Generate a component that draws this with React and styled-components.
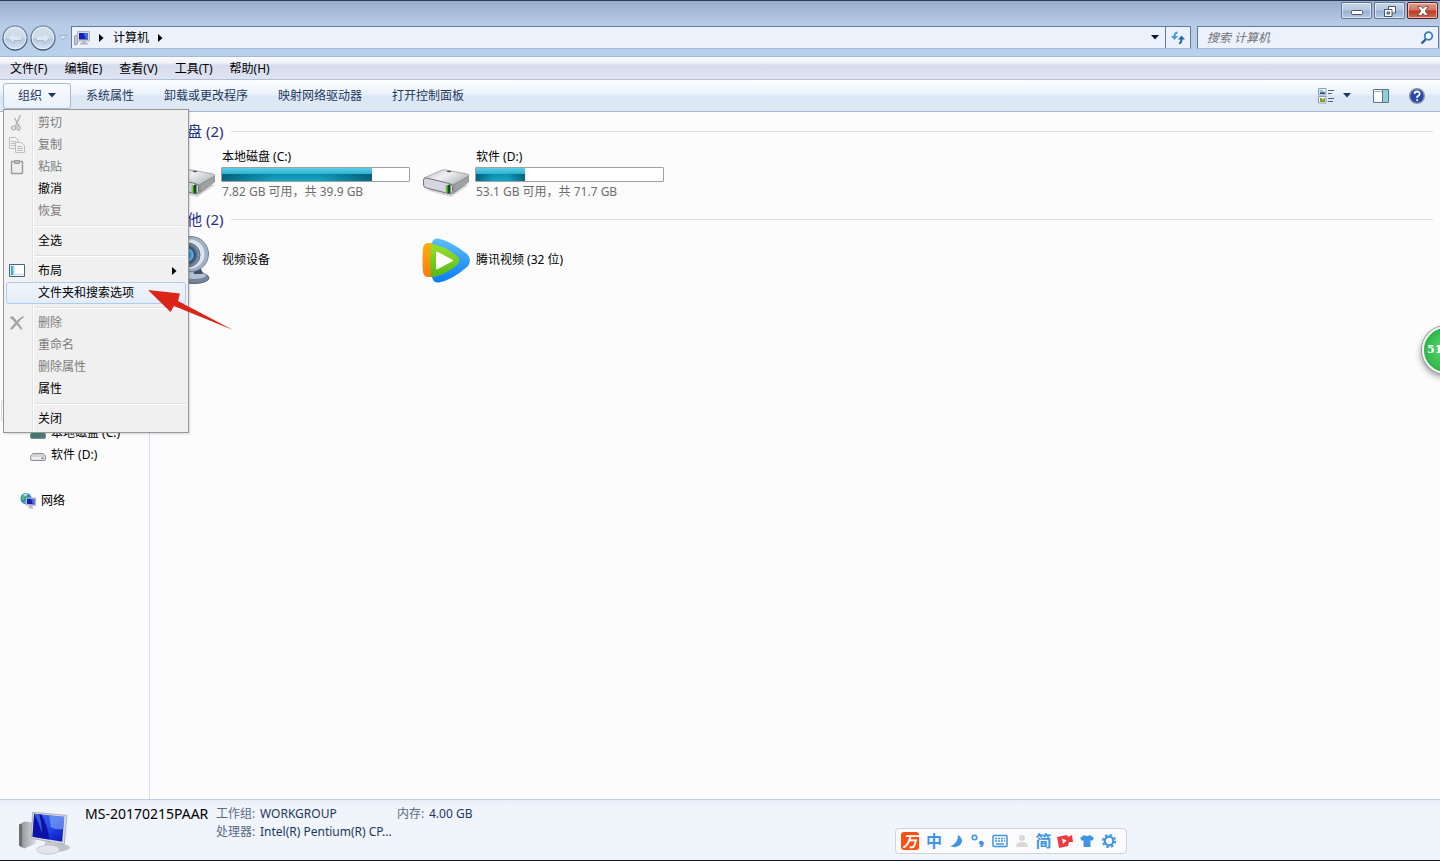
import React from "react";
import styled, { createGlobalStyle, css } from "styled-components";

const Global = createGlobalStyle`
  * { box-sizing: border-box; }
  body { margin: 0; }
  body, button, input {
    font-family: "Noto Sans", "Noto Sans CJK SC", sans-serif;
    font-size: 12px;
    line-height: 18px;
    color: #000;
  }
  button { padding: 0; border: 0; background: none; }
  svg { display: block; flex: none; }
`;

const Window = styled.div`
  position: relative;
  display: flex;
  flex-direction: column;
  min-height: 100vh;
  overflow: hidden;
  border-top: 1px solid #2b3a55;
  border-bottom: 1px solid #10182c;
  background: #fcfcfc;
`;

/* ---------- frame ---------- */
const Frame = styled.header`
  background: linear-gradient(#98afcd, #b7cce6 24px, #b9d1ec 56px);
  border-bottom: 1px solid #a3b8d4;
`;
const Captions = styled.div`
  display: flex;
  justify-content: flex-end;
  gap: 2px;
  height: 24px;
  padding: 1px 2px 0 0;
`;
const CaptionButton = styled.button`
  display: flex;
  align-items: center;
  justify-content: center;
  width: 31px;
  height: 17px;
  padding-top: 1px;
  border: 1px solid #5f7795;
  border-radius: 2px;
  box-shadow: inset 0 0 0 1px rgba(255, 255, 255, 0.55);
  background: ${(p) =>
    p.$close
      ? "linear-gradient(#e3a08f, #d5715b 48%, #bd3a22 52%, #cf6a52)"
      : "linear-gradient(#c6d6ea, #b4c8e1 48%, #98b1d0 52%, #b3c9e4)"};
  ${(p) => p.$close && css`border-color: #5a1f22;`}
`;
const AddressRow = styled.div`
  display: flex;
  align-items: center;
  height: 31px;
  padding: 0 1px 6px 2px;
`;
const Travel = styled.div`
  display: flex;
  align-items: center;
  gap: 2px;
  width: 69px;
`;
const RoundButton = styled.button`
  flex: none;
  width: 26px;
  height: 26px;
`;
const Address = styled.div`
  flex: 1;
  display: flex;
  align-items: center;
  height: 23px;
  border: 1px solid #63799a;
  border-bottom-color: #a9bdd8;
  background: #ebf2fb;
`;
const Crumb = styled.button`
  display: flex;
  align-items: center;
  gap: 9px;
  padding-left: ${(p) => p.$lead || 9}px;
`;
const Spacer = styled.div`
  flex: 1;
`;
const AddressButton = styled.button`
  display: flex;
  align-items: center;
  justify-content: center;
  width: ${(p) => p.$w}px;
  height: 21px;
  border-left: ${(p) => (p.$line ? "1px solid #63799a" : "0")};
`;
const Search = styled.label`
  display: flex;
  align-items: center;
  width: 242px;
  height: 23px;
  margin-left: 6px;
  padding: 0 4px 0 9px;
  border: 1px solid #63799a;
  border-bottom-color: #a9bdd8;
  background: #ebf2fb;
`;
const SearchInput = styled.input`
  flex: 1;
  min-width: 0;
  padding: 0;
  border: 0;
  outline: 0;
  background: none;
  font-style: italic;
  &::placeholder { color: #6e7177; opacity: 1; }
`;

/* ---------- bars ---------- */
const MenuBar = styled.nav`
  display: flex;
  align-items: center;
  gap: 1px;
  height: 23px;
  padding: 2px 2px 0;
  background: linear-gradient(#fdfdfe, #eef1f8 6px, #d6dcec 8px, #dee4f2);
  border-bottom: 1px solid #b2bfd6;
`;
const MenuBarButton = styled.button`
  padding: 0 8px;
`;
const ToolBar = styled.div`
  display: flex;
  align-items: center;
  height: 32px;
  padding: 0 15px 0 3px;
  background: linear-gradient(#fbfdff, #eaf2fb 14px, #dce7f5 16px, #dfe9f6);
  border-bottom: 1px solid #a5b6d1;
`;
const ToolButton = styled.button`
  display: flex;
  align-items: center;
  gap: 6px;
  height: 26px;
  padding: 0 15px;
  color: #1e395b;
  ${(p) => p.$open && css`
    padding: 0 14px;
    border: 1px solid #a8bad4;
    border-radius: 3px;
    background: linear-gradient(#f8fbfe, #e9f1fa);
  `}
`;
const IconTools = styled.div`
  display: flex;
  align-items: center;
`;
const IconButton = styled.button`
  display: flex;
  align-items: center;
  justify-content: center;
  height: 24px;
  margin-left: ${(p) => p.$gap}px;
`;

/* ---------- body ---------- */
const Body = styled.div`
  flex: 1;
  display: flex;
`;
const NavPane = styled.aside`
  width: 150px;
  padding-top: 288px;
  border-right: 1px solid #d9e0ea;
`;
const NavSelected = styled.div`
  height: 22px;
  margin: 0 1px;
  border: 1px solid #d9d9d9;
  border-radius: 3px;
`;
const NavItem = styled.a`
  display: flex;
  align-items: center;
  gap: 5px;
  height: 22px;
  padding-left: ${(p) => (p.$root ? 20 : 30)}px;
  margin-top: ${(p) => (p.$root ? 24 : 0)}px;
  color: #000;
  text-decoration: none;
`;
const Main = styled.main`
  flex: 1;
  padding: 8px 7px 0 18px;
`;
const GroupHeading = styled.h2`
  display: flex;
  align-items: center;
  gap: 8px;
  height: 22px;
  margin: 0;
  padding-left: 4px;
  font-size: 15px;
  font-weight: 400;
  color: #1e3287;
  &::after { content: ""; flex: 1; height: 1px; background: #dcdcdc; }
`;
const Tiles = styled.div`
  display: grid;
  grid-template-columns: repeat(auto-fill, 254px);
`;
const Tile = styled.div`
  display: flex;
  align-items: center;
  gap: 5px;
  height: ${(p) => (p.$tall ? 66 : 60)}px;
  padding-bottom: ${(p) => (p.$tall ? 2 : 0)}px;
`;
const TileText = styled.div`
  display: flex;
  flex-direction: column;
  gap: 1px;
  width: 189px;
`;
const TileLine = styled.span`
  padding-left: 1px;
  color: ${(p) => (p.$muted ? "#6d6d6d" : "#000")};
`;
const Meter = styled.div`
  height: 15px;
  border: 1px solid #a0a0a0;
  border-radius: 1px;
  background: #fff;
`;
const MeterFill = styled.div`
  height: 13px;
  background:
    linear-gradient(90deg, rgba(0, 60, 85, 0.6), transparent 35%, transparent 65%, rgba(0, 60, 85, 0.6)) 0 6px / 100% 7px no-repeat,
    linear-gradient(#5ccfe8, #2fb2d0 45%, #0a91b2 48%, #14a6c3);
`;

/* ---------- details pane ---------- */
const Details = styled.footer`
  display: flex;
  align-items: flex-start;
  height: 61px;
  padding: 5px 0 0 17px;
  border-top: 1px solid #c2cddf;
  background: linear-gradient(#e6edf7, #f0f4fb 6px);
  color: #1e395b;
`;
const MachineName = styled.strong`
  margin-left: 14px;
  width: 131px;
  font-size: 14px;
  font-weight: 400;
  color: #000;
`;
const Facts = styled.dl`
  display: grid;
  grid-template-columns: 44px 137px 32px auto;
  margin: 0;
`;
const FactName = styled.dt`
  color: #5a6a83;
`;
const FactValue = styled.dd`
  margin: 0;
  white-space: nowrap;
`;

/* ---------- drop-down menu ---------- */
const Menu = styled.div`
  position: absolute;
  left: 3px;
  top: 108px;
  width: 186px;
  padding: 2px;
  border: 1px solid #979797;
  background: linear-gradient(90deg, #f1f1f1 28px, #e2e3e3 28px, #e2e3e3 29px, #fff 29px, #fff 30px, #f0f0f0 30px);
  box-shadow: 1px 1px 2px rgba(0, 0, 0, 0.15);
`;
const MenuItem = styled.button`
  display: flex;
  align-items: center;
  width: 100%;
  height: 22px;
  padding-right: 8px;
  border: 1px solid transparent;
  border-radius: 3px;
  color: ${(p) => (p.disabled ? "#7c7c7c" : "#000")};
  ${(p) => p.$hot && css`
    border-color: #aeccee;
    background: linear-gradient(rgba(240, 245, 252, 0.8), rgba(224, 236, 248, 0.8));
  `}
`;
const MenuIcon = styled.span`
  width: 31px;
  padding-left: 2px;
`;
const MenuLabel = styled.span`
  flex: 1;
  text-align: left;
`;
const Separator = styled.div`
  height: 8px;
  margin-left: 28px;
  background: linear-gradient(transparent 3px, #e0e0e0 3px, #e0e0e0 4px, #fff 4px, #fff 5px, transparent 5px);
`;
const Pointer = styled.svg`
  position: absolute;
  left: 148px;
  top: 288px;
`;

/* ---------- floating widgets ---------- */
const Ime = styled.div`
  position: absolute;
  right: 313px;
  bottom: 6px;
  display: flex;
  align-items: center;
  width: 232px;
  height: 26px;
  padding: 0 6px 0 3px;
  border: 1px solid #cfd3da;
  border-radius: 4px;
  background: #fbfbfd;
`;
const ImeButton = styled.button`
  display: flex;
  align-items: center;
  justify-content: center;
  flex: 1;
  height: 22px;
  font-size: 16px;
  font-weight: 700;
  color: #3f94e4;
  &:first-child { flex: 0 0 24px; justify-content: flex-start; padding-left: 2px; }
`;
const ImeLogo = styled.span`
  width: 18px;
  height: 18px;
  border-radius: 3px;
  background: #fb5012;
  color: #fff;
  font-size: 15px;
  font-style: italic;
  text-align: center;
`;
const Ball = styled.div`
  position: absolute;
  right: -30px;
  top: 325px;
  width: 48px;
  height: 48px;
  padding: 13px 0 0 3px;
  border: 2px solid #eef4f0;
  border-radius: 50%;
  background: radial-gradient(circle at 50% 50%, #63da72, #35bd4e 60%, #1e8d3a 92%);
  box-shadow: 0 0 0 1px #8e9a94, -1px 3px 6px rgba(0, 0, 0, 0.4);
  color: #fff;
  font: 700 11px/18px "DejaVu Serif", serif;
`;

/* ---------- drawings ---------- */
const Triangle = ({ dir = "down", color = "#000" }) => {
  const d = dir === "down" ? "M0 0h8L4 4.5z" : "M0 0v8L4.5 4z";
  return (
    <svg width={dir === "down" ? 8 : 5} height={dir === "down" ? 5 : 8} aria-hidden="true">
      <path d={d} fill={color} />
    </svg>
  );
};

const RoundArrow = ({ back }) => {
  const id = back ? "rb" : "rf";
  return (
    <svg width="26" height="26" viewBox="0 0 26 26" aria-hidden="true">
      <defs>
        <linearGradient id={id} x1="0" y1="0" x2="0" y2="1">
          <stop offset="0" stopColor="#d5e1ee" />
          <stop offset=".48" stopColor="#ccd9e8" />
          <stop offset=".56" stopColor="#b5c8dc" />
          <stop offset="1" stopColor="#dbe9f6" />
        </linearGradient>
        <linearGradient id={`${id}s`} x1="0" y1="0" x2="0" y2="1">
          <stop offset="0" stopColor="#7f93af" />
          <stop offset="1" stopColor="#46566e" />
        </linearGradient>
      </defs>
      <circle cx="13" cy="13" r="12" fill={`url(#${id})`} stroke={`url(#${id}s)`} strokeWidth="1.3" />
      <circle cx="13" cy="13" r="10.8" fill="none" stroke="#eef5fb" strokeOpacity=".75" />
      <path
        d={
          back
            ? "M6.500 13.500L12 8.500v3h7v4h-7v3z"
            : "M19.500 13.500L14 8.500v3H7v4h7v3z"
        }
        fill="#dce7f2"
      />
      <path
        d={back ? "M7 14l5 4.500v-3h7" : "M19 14l-5 4.500v-3H7"}
        fill="none"
        stroke="#9fb3c9"
        strokeWidth=".8"
      />
    </svg>
  );
};

const SmallComputer = () => (
  <svg width="16" height="16" viewBox="0 0 16 16" aria-hidden="true">
    <path d="M.5 6l3-1v9l-2 1-1-.500z" fill="#c5c9ce" stroke="#7e848c" strokeWidth=".7" />
    <path d="M3.500 1.500h12v9.500h-12z" fill="#d9dcdf" stroke="#a3a8ae" strokeWidth=".8" />
    <path d="M5 3h9v6.500H5z" fill="#1420b4" />
    <path d="M9.500 3H14v6.500h-2z" fill="#4768e4" />
    <path d="M8 11h4v2h2v1.500H6V13h2z" fill="#b4b8bd" />
  </svg>
);

const Computer = () => (
  <svg width="54" height="54" viewBox="0 0 52 52" aria-hidden="true">
    <defs>
      <linearGradient id="screen" x1="0" y1="0" x2="0.700" y2="1">
        <stop offset="0" stopColor="#3b66e6" />
        <stop offset=".5" stopColor="#2a50ea" />
        <stop offset="1" stopColor="#1020c8" />
      </linearGradient>
      <linearGradient id="tower" x1="0" y1="0" x2="1" y2="0">
        <stop offset="0" stopColor="#8b8e92" />
        <stop offset="1" stopColor="#dcdee0" />
      </linearGradient>
    </defs>
    <ellipse cx="38" cy="41" rx="13" ry="4" fill="#8d949c" opacity=".5" />
    <path d="M2 19l5-3 11 1v20L7 42l-5-3z" fill="url(#tower)" />
    <path d="M2 18l3 1v22l-3-2z" fill="#6b6e72" />
    <path d="M27 35h7l1 7h-9z" fill="#c8cccf" />
    <ellipse cx="30" cy="43" rx="11" ry="4.500" fill="#e3e6e8" stroke="#b4b8bc" strokeWidth=".6" />
    <path d="M15 7l33 3-2.500 28L14 32z" fill="#d8dbde" stroke="#9a9ea3" strokeWidth=".7" />
    <path d="M16.500 8.500l29 2.700L43.500 35.500 15 30.500z" fill="url(#screen)" />
    <path d="M16.500 8.500l7 .6Q30 20 31 33.300L15 30.500z" fill="#0a12a8" />
    <path d="M16.500 8.500l5 .5Q24 20 24 27q-3-10-7.500-18.500z" fill="#4f78ee" opacity=".7" />
    <path d="M31 10l14.500 1.200-1 12q-8 1-12-2z" fill="#86aef8" opacity=".6" />
  </svg>
);

const Drive = ({ flag }) => {
  const id = flag ? "driveC" : "driveD";
  return (
    <svg width="48" height="48" viewBox="0 0 48 48" aria-hidden="true">
      <defs>
        <linearGradient id={id} x1="0" y1="0" x2="1" y2=".6">
          <stop offset="0" stopColor="#b9babd" />
          <stop offset=".5" stopColor="#f0f0f1" />
          <stop offset="1" stopColor="#b7b8bb" />
        </linearGradient>
      </defs>
      <path d="M4 40l25 7 18-12-6-1z" fill="#777" opacity=".3" />
      <path d="M2 28L19 20.500q2-1 5-.5l21 4q3 1 1.500 2.500L31 35z" fill={`url(#${id})`} stroke="#8b8d90" strokeWidth=".7" />
      <path d="M30 35l17-9.500V32L31 44z" fill="#939599" />
      <path d="M33 36.500l13-8M33 39l13-8" stroke="#b9bbbe" strokeWidth=".8" />
      <path d="M1.500 30q0-2.500 3-2l23 5.500q3 .7 3 3v5q0 3-3 2.300L4.500 38q-3-.7-3-3z" fill="#d5d6e2" stroke="#707378" />
      <path d="M25 35.500l3.500-1.500v9.500l-3.500-.500z" fill="#174d22" />
      <path d="M23.500 35.500l2-.5v8l-2-.5z" fill="#79c843" />
      <ellipse cx="27" cy="21.500" rx="2.500" ry=".8" fill="#555" />
    </svg>
  );
};

const Webcam = () => (
  <svg width="48" height="48" viewBox="0 0 48 48" aria-hidden="true">
    <defs>
      <radialGradient id="cam" cx=".45" cy=".5">
        <stop offset="0" stopColor="#0d2f52" />
        <stop offset=".25" stopColor="#2f86c8" />
        <stop offset=".5" stopColor="#5fb0e0" />
        <stop offset=".65" stopColor="#31496a" />
        <stop offset="1" stopColor="#8495ae" />
      </radialGradient>
    </defs>
    <ellipse cx="26" cy="42" rx="15" ry="5.500" fill="#76859c" stroke="#54637a" />
    <ellipse cx="26" cy="39.500" rx="12.500" ry="4" fill="#b4c0d0" stroke="#65748a" strokeWidth=".7" />
    <path d="M24 30h8l3 8h-9z" fill="#3f4f68" />
    <circle cx="23" cy="18" r="17.500" fill="#a3b1c5" stroke="#72839b" />
    <circle cx="22" cy="18" r="14.500" fill="#dbe3ec" />
    <circle cx="20" cy="19" r="12" fill="url(#cam)" stroke="#5b6a81" />
  </svg>
);

const TencentVideo = () => (
  <svg width="48" height="48" viewBox="0 0 48 48" aria-hidden="true">
    <defs>
      <linearGradient id="tb" x1="0" y1="0" x2="0" y2="1">
        <stop offset="0" stopColor="#5cc0fa" />
        <stop offset="1" stopColor="#0a7cfb" />
      </linearGradient>
      <linearGradient id="to" x1="0" y1="0" x2="0" y2="1">
        <stop offset="0" stopColor="#ffae0c" />
        <stop offset="1" stopColor="#ff7a10" />
      </linearGradient>
      <linearGradient id="tg" x1="0" y1="0" x2="0" y2="1">
        <stop offset="0" stopColor="#9be02e" />
        <stop offset="1" stopColor="#55b810" />
      </linearGradient>
    </defs>
    <path d="M10 7q1-5 6-4.500 12 2 29 15.500 6 6.500 0 13-15 13-28 15.500-6 .5-7-5.500-2-16 0-34z" fill="url(#tb)" />
    <path d="M1 12q1-5 5-5h4q14 34 0 34H6q-4 0-5-5-1-12 0-24z" fill="url(#to)" />
    <path d="M9 8q12 1 26 12 5 4.500 0 9-13 11-26 12-2-16 0-33z" fill="url(#tg)" />
    <path d="M14 17q0-2 2-1l14 7.500q2 1 0 2L16 33q-2 1-2-1z" fill="#fff" />
  </svg>
);

const SmallDrive = ({ system }) => (
  <svg width="16" height="16" viewBox="0 0 16 16" aria-hidden="true">
    {system && <path d="M1 3h14v6H1z" fill="#3d7fa6" />}
    <path d="M3 6.500h10q2 1.500 2.500 3V12q0 1.500-1.500 1.500H2Q.5 13.500.5 12V9.500Q1 8 3 6.500z" fill={system ? "#3c8a78" : "#d3d4d6"} stroke="#77797c" strokeWidth=".8" />
    <path d="M1.500 10h13v2.500h-13z" fill={system ? "#4f6f78" : "#eeeff0"} />
    <path d="M11.500 10.500h2v1.500h-2z" fill="#6a7a6a" />
  </svg>
);

const Network = () => (
  <svg width="16" height="16" viewBox="0 0 16 16" aria-hidden="true">
    <circle cx="6" cy="5.500" r="5.500" fill="#2a86cf" />
    <path d="M2 3q2-3 6-2.500L7 3 4.500 4.500 4 7 1 6zM3 8l3 .5V11z" fill="#5cc06a" />
    <path d="M3 2q2-2 5-1L6 3z" fill="#bfe6f4" />
    <path d="M6 4.500l9.500.5v7.500L6 12z" fill="#dcdfe4" stroke="#8a8f98" strokeWidth=".6" />
    <path d="M7 5.500l7.500.5v5.500L7 11z" fill="#1420b8" />
    <path d="M11 5.800l3.500.2v5.500H13z" fill="#4a6be6" />
    <path d="M9 12.500h3l1.500 3h-5z" fill="#b4b9c0" />
  </svg>
);

const MENU_ICONS = {
  cut: (
    <svg width="16" height="16" viewBox="0 0 16 16" fill="none" stroke="#b0b0b0" strokeWidth="1.300">
      <path d="M11.500 0L6.500 11M5.500 3l4.500 8" />
      <ellipse cx="4.500" cy="13" rx="2" ry="1.800" />
      <ellipse cx="9.500" cy="13" rx="1.500" ry="2.200" />
    </svg>
  ),
  copy: (
    <svg width="16" height="16" viewBox="0 0 16 16" fill="#f2f2f2" stroke="#bdbdbd">
      <path d="M.5.500h6l2.500 2.500v8.500H.5zM2 4.500h5M2 6.500h5M2 8.500h4" />
      <path d="M6.500 5.500h6l3 3v7h-9zM8 9.500h5M8 11.500h6M8 13.500h6" />
    </svg>
  ),
  paste: (
    <svg width="16" height="16" viewBox="0 0 16 16" fill="#eee" stroke="#9c9c9c">
      <path d="M3 2.500h10q.5 0 .5.500v11q0 .5-.5.500H3q-.5 0-.5-.500V3q0-.5.5-.500z" strokeWidth="1.400" />
      <path d="M5.500 1.500h5v3h-5z" fill="#bbb" />
    </svg>
  ),
  layout: (
    <svg width="16" height="16" viewBox="0 0 16 16">
      <path d="M.5 1.500h15v12H.5z" fill="#fff" stroke="#44647f" />
      <path d="M1.500 2.500h4v10h-4z" fill="#a5d8ea" />
      <path d="M2 3h2v9H2z" fill="#4fa5cb" />
      <path d="M5.500 10.500H15v2H5.500z" fill="#d3e2ea" />
    </svg>
  ),
  remove: (
    <svg width="16" height="16" viewBox="0 0 16 16" fill="#a6a6a6">
      <path d="M.5 2.500l3-1.500Q6 3 7.800 6 11 2 14.500 1L15 2Q12 4 9.300 8q3 3 4.200 6l-2 .5Q10 12 7.500 9.800 5 12.500 3 15l-2-1.500Q3.500 11 6 7.800 3.500 4.500.5 2.500z" />
    </svg>
  ),
};

const MENU = [
  { label: "剪切", icon: "cut", off: true },
  { label: "复制", icon: "copy", off: true },
  { label: "粘贴", icon: "paste", off: true },
  { label: "撤消" },
  { label: "恢复", off: true },
  null,
  { label: "全选" },
  null,
  { label: "布局", icon: "layout", sub: true },
  { label: "文件夹和搜索选项", hot: true },
  null,
  { label: "删除", icon: "remove", off: true },
  { label: "重命名", off: true },
  { label: "删除属性", off: true },
  { label: "属性" },
  null,
  { label: "关闭" },
];

const DRIVES = [
  { name: "本地磁盘 (C:)", info: "7.82 GB 可用，共 39.9 GB", used: 80.4, flag: true },
  { name: "软件 (D:)", info: "53.1 GB 可用，共 71.7 GB", used: 26 },
];

const BLUE = "#3f94e4";

export default function App() {
  return (
    <>
      <Global />
      <Window>
        <Frame>
          <Captions>
            <CaptionButton aria-label="最小化">
              <svg width="12" height="8"><rect x=".5" y="3.500" width="11" height="4" rx="1" fill="#fff" stroke="#4a5568" /></svg>
            </CaptionButton>
            <CaptionButton aria-label="还原">
              <svg width="12" height="11" viewBox="0 0 12 11" stroke="#4a5568">
                <path d="M4.500.5h7v6.500h-7z" fill="#fff" />
                <path d="M.5 3.500h7.500v7H.5z" fill="#fff" />
                <path d="M3 6h2.500v2H3z" fill="#a9bdd8" />
              </svg>
            </CaptionButton>
            <CaptionButton $close aria-label="关闭窗口">
              <svg width="12" height="10" viewBox="0 0 12 10">
                <path d="M.5.500h3.500L6 2.500 8 .5h3.500L8.200 5l3.300 4.500H8L6 7.500l-2 2H.5L3.800 5z" fill="#fff" stroke="#55424a" strokeWidth=".8" />
              </svg>
            </CaptionButton>
          </Captions>
          <AddressRow>
            <Travel>
              <RoundButton aria-label="后退"><RoundArrow back /></RoundButton>
              <RoundButton aria-label="前进"><RoundArrow /></RoundButton>
              <svg width="10" height="6"><path d="M1 .5h8L5 5z" fill="#d3e1f0" stroke="#9db2cd" /></svg>
            </Travel>
            <Address>
              <Crumb $lead={2} aria-label="位置">
                <SmallComputer />
                <Triangle dir="right" />
              </Crumb>
              <Crumb>
                计算机
                <Triangle dir="right" />
              </Crumb>
              <Spacer />
              <AddressButton $w={20} aria-label="历史记录"><Triangle color="#0c1a3a" /></AddressButton>
              <AddressButton $w={25} $line aria-label="刷新">
                <svg width="14" height="14" viewBox="0 0 14 14" fill="none" strokeWidth="2">
                  <path d="M6.500 1.500Q3.500 2 3.500 6" stroke="#3f9be0" />
                  <path d="M0 5h7L3.500 9z" fill="#3f9be0" />
                  <path d="M8 12.500q2.500-.5 2.500-5" stroke="#2567ad" />
                  <path d="M7 8.500h7L10.500 4.500z" fill="#2567ad" />
                </svg>
              </AddressButton>
            </Address>
            <Search>
              <SearchInput placeholder="搜索 计算机" aria-label="搜索 计算机" />
              <svg width="14" height="14" viewBox="0 0 14 14" fill="none">
                <path d="M6 8L1.500 12.500" stroke="#2f5c96" strokeWidth="2.400" />
                <circle cx="8.500" cy="5" r="3.800" stroke="#3a78b8" strokeWidth="1.700" fill="#f4f9ff" />
              </svg>
            </Search>
          </AddressRow>
        </Frame>

        <MenuBar>
          {["文件(F)", "编辑(E)", "查看(V)", "工具(T)", "帮助(H)"].map((t) => (
            <MenuBarButton key={t}>{t}</MenuBarButton>
          ))}
        </MenuBar>

        <ToolBar>
          <ToolButton $open>组织<Triangle color="#1e395b" /></ToolButton>
          {["系统属性", "卸载或更改程序", "映射网络驱动器", "打开控制面板"].map((t) => (
            <ToolButton key={t}>{t}</ToolButton>
          ))}
          <Spacer />
          <IconTools>
            <IconButton $gap={0} aria-label="更改视图">
              <svg width="16" height="16" viewBox="0 0 16 16">
                <path d="M.5.500h7.500v6.500H.5zM.5 8.500h7.500v6.500H.5z" fill="#fff" stroke="#8a9db5" />
                <path d="M1.500 2l2.500-.5 3 2.500v2H1.500z" fill="#8fc3dd" />
                <path d="M2 4.500h5V6H2z" fill="#23475f" />
                <path d="M2 10h2l1 2 1-2h1v4H2z" fill="#8a9c2c" />
                <path d="M10 2.500h6M10 5.500h4M10 10.500h6M10 13.500h5" stroke="#4f6078" />
              </svg>
            </IconButton>
            <IconButton $gap={9} aria-label="视图选项"><Triangle color="#1e395b" /></IconButton>
            <IconButton $gap={22} aria-label="预览窗格">
              <svg width="16" height="14" viewBox="0 0 16 14">
                <path d="M.5.500h15v13H.5z" fill="#fff" stroke="#5b7590" />
                <path d="M10 1h5v12h-5z" fill="#8fd0de" />
                <path d="M9.500 1v12" stroke="#5b7590" />
                <path d="M1 2.500h8" stroke="#a9bccd" />
              </svg>
            </IconButton>
            <IconButton $gap={20} aria-label="帮助">
              <svg width="16" height="16" viewBox="0 0 16 16">
                <circle cx="8" cy="8" r="7.300" fill="#2949a8" stroke="#8592ad" strokeWidth="1.400" />
                <path d="M5.500 6q0-2.500 2.600-2.500T10.700 6Q10.700 7.200 8.200 8.800V10M8.200 11.300v1.700" fill="none" stroke="#fff" strokeWidth="1.800" />
              </svg>
            </IconButton>
          </IconTools>
        </ToolBar>

        <Body>
          <NavPane>
            <NavSelected />
            <NavItem href="#c"><SmallDrive system />本地磁盘 (C:)</NavItem>
            <NavItem href="#d"><SmallDrive />软件 (D:)</NavItem>
            <NavItem href="#net" $root><Network />网络</NavItem>
          </NavPane>
          <Main>
            <GroupHeading>硬盘 (2)</GroupHeading>
            <Tiles>
              {DRIVES.map((d) => (
                <Tile key={d.name} $tall>
                  <Drive flag={d.flag} />
                  <TileText>
                    <TileLine>{d.name}</TileLine>
                    <Meter><MeterFill style={{ width: `${d.used}%` }} /></Meter>
                    <TileLine $muted>{d.info}</TileLine>
                  </TileText>
                </Tile>
              ))}
            </Tiles>
            <GroupHeading>其他 (2)</GroupHeading>
            <Tiles>
              <Tile><Webcam /><TileText><TileLine>视频设备</TileLine></TileText></Tile>
              <Tile><TencentVideo /><TileText><TileLine>腾讯视频 (32 位)</TileLine></TileText></Tile>
            </Tiles>
          </Main>
        </Body>

        <Details>
          <Computer />
          <MachineName>MS-20170215PAAR</MachineName>
          <Facts>
            <FactName>工作组:</FactName><FactValue>WORKGROUP</FactValue>
            <FactName>内存:</FactName><FactValue>4.00 GB</FactValue>
            <FactName>处理器:</FactName><FactValue>Intel(R) Pentium(R) CP...</FactValue>
          </Facts>
        </Details>

        <Menu>
          {MENU.map((m, i) =>
            m ? (
              <MenuItem key={i} disabled={m.off} $hot={m.hot}>
                <MenuIcon>{m.icon && MENU_ICONS[m.icon]}</MenuIcon>
                <MenuLabel>{m.label}</MenuLabel>
                {m.sub && <Triangle dir="right" />}
              </MenuItem>
            ) : (
              <Separator key={i} />
            )
          )}
        </Menu>
        <Pointer width="88" height="44" viewBox="0 0 88 44" aria-hidden="true">
          <path d="M0 1l32 3.500-2 7.500 55 29-59-24-3.500 6z" fill="#dc2318" />
        </Pointer>

        <Ball>51</Ball>

        <Ime>
          <ImeButton aria-label="万能五笔"><ImeLogo>万</ImeLogo></ImeButton>
          <ImeButton>中</ImeButton>
          <ImeButton aria-label="半角">
            <svg width="14" height="14"><path d="M9 1q6 4 3 9-4 5-11 2 8-2 8-11z" fill={BLUE} /></svg>
          </ImeButton>
          <ImeButton aria-label="标点">
            <svg width="14" height="14">
              <circle cx="3.500" cy="3.500" r="2.300" fill="none" stroke={BLUE} strokeWidth="1.500" />
              <path d="M8 8q2-2 4-.5 2 2.500-1 5.500H8q2-1 2-2-2 0-2-3z" fill={BLUE} />
            </svg>
          </ImeButton>
          <ImeButton aria-label="软键盘">
            <svg width="16" height="14">
              <rect x="1" y="1.500" width="14" height="11" rx="1" fill="none" stroke={BLUE} strokeWidth="1.500" />
              <path d="M3 4.500h10M3 7h10" stroke={BLUE} strokeWidth="1.500" strokeDasharray="2 1" />
              <path d="M4 10h8" stroke={BLUE} strokeWidth="1.500" />
            </svg>
          </ImeButton>
          <ImeButton aria-label="账户">
            <svg width="14" height="14" fill="#d8d8d8"><circle cx="7" cy="4" r="3" /><path d="M1 13q0-5 6-5t6 5z" /></svg>
          </ImeButton>
          <ImeButton>简</ImeButton>
          <ImeButton aria-label="视频">
            <svg width="16" height="14">
              <path d="M0 3l10-2 1 2 4-2 1 7-4 0-1 4-9 2z" fill="#ee3a3e" />
              <path d="M5 4.500l4.500 2L6 10z" fill="#fff" />
            </svg>
          </ImeButton>
          <ImeButton aria-label="皮肤">
            <svg width="16" height="14"><path d="M5 1q3 2 6 0l4 3-2 3-1.500-1v7h-7V6L3 7 1 4z" fill={BLUE} /></svg>
          </ImeButton>
          <ImeButton aria-label="设置">
            <svg width="16" height="16" viewBox="0 0 16 16" fill="none" stroke={BLUE}>
              <circle cx="8" cy="8" r="4.300" strokeWidth="2.200" />
              <circle cx="8" cy="8" r="6.200" strokeWidth="1.800" strokeDasharray="2.430 2.430" />
            </svg>
          </ImeButton>
        </Ime>
      </Window>
    </>
  );
}
